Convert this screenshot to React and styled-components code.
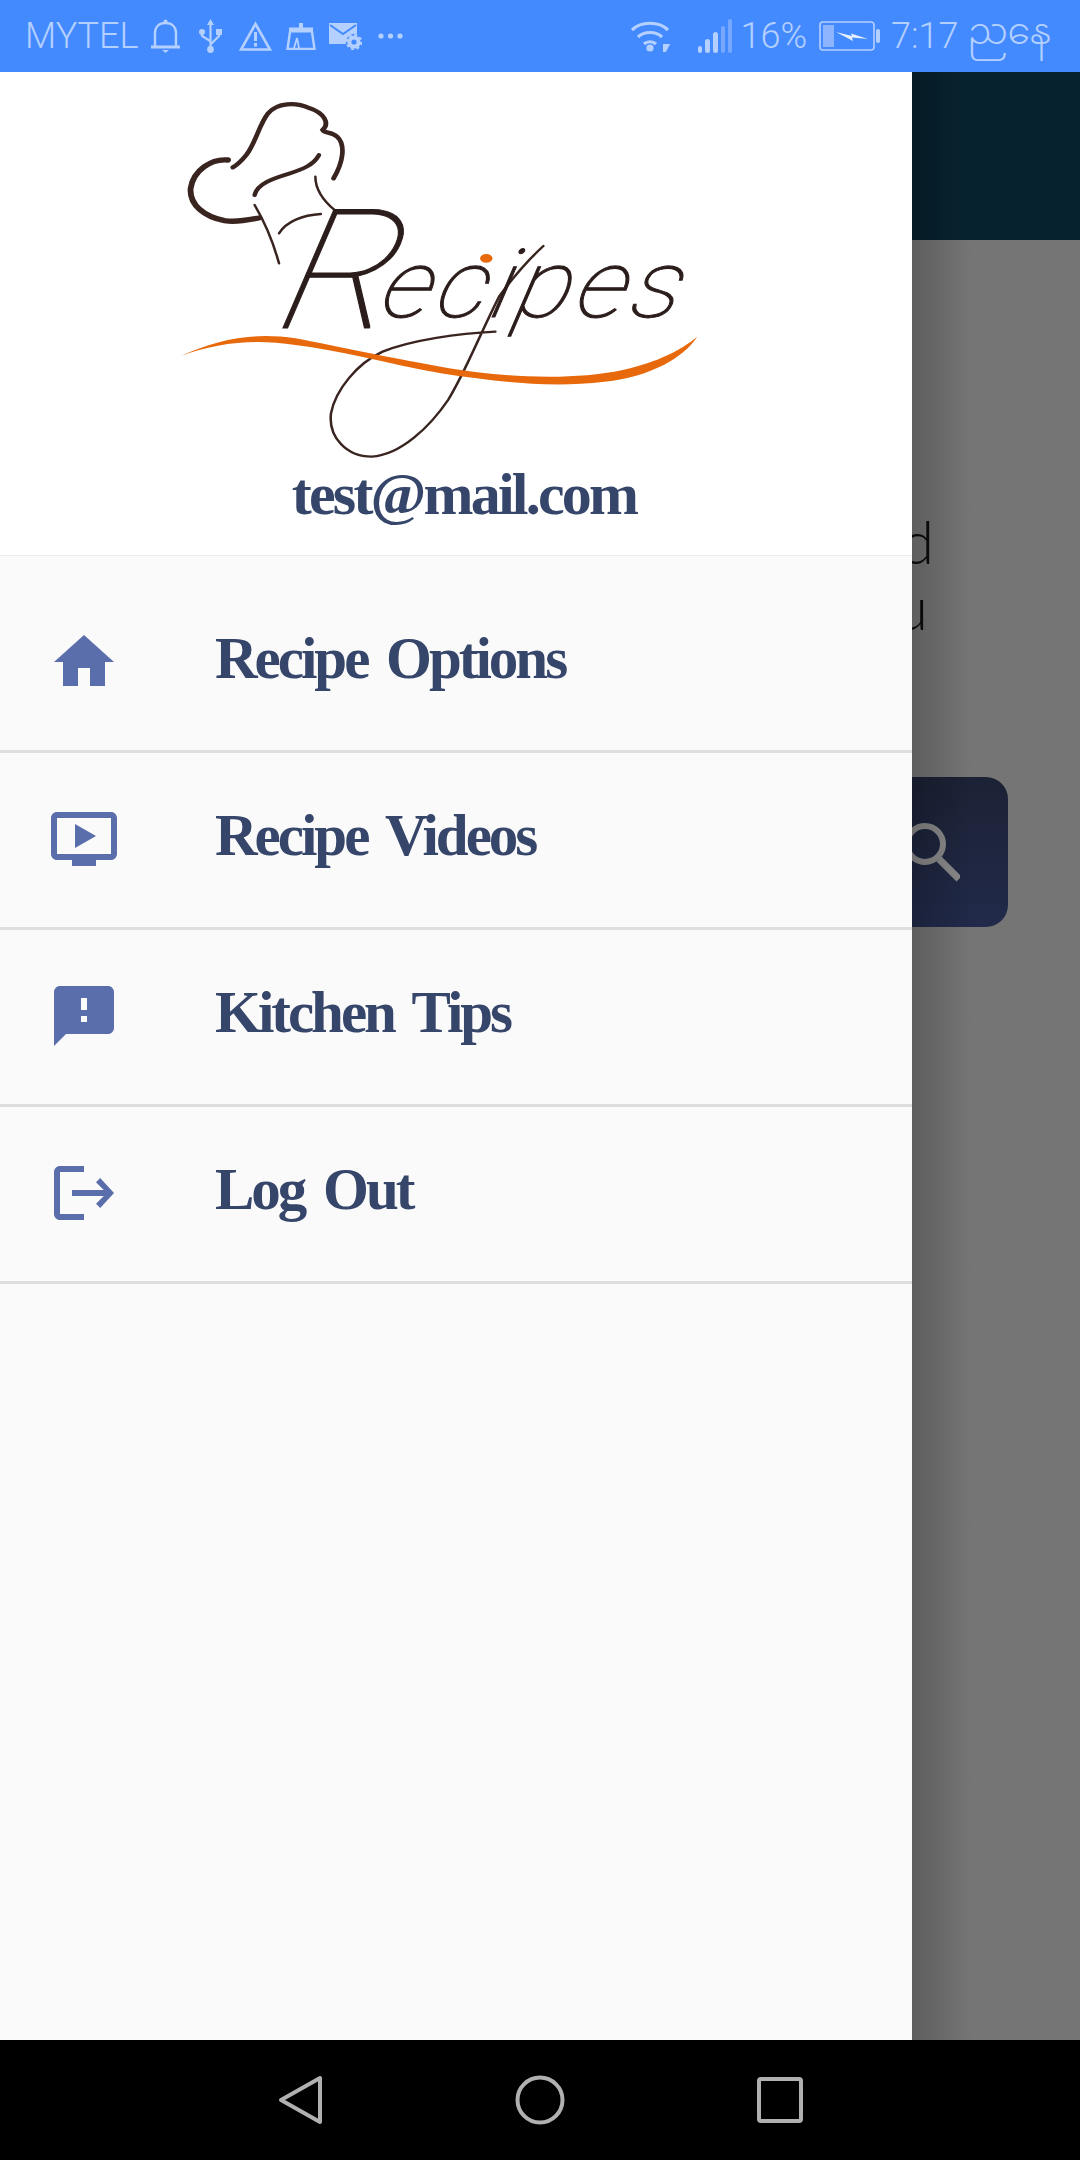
import React from "react";
import styled, { createGlobalStyle } from "styled-components";

const Global = createGlobalStyle`
  html, body {
    margin: 0;
    padding: 0;
    background: #757575;
  }
  * {
    box-sizing: border-box;
  }
`;

const Screen = styled.div`
  width: 1080px;
  height: 2160px;
  display: flex;
  flex-direction: column;
  overflow: hidden;
  font-family: "Liberation Serif", serif;
`;

const StatusBar = styled.div`
  height: 72px;
  flex: none;
  background: #448aff;
  color: #b4d0ff;
  display: flex;
  align-items: center;
  justify-content: space-between;
  padding: 0 29px 0 25px;
  font-family: Roboto, sans-serif;
  font-weight: 300;
  font-size: 36px;
`;

const StatusGroup = styled.div`
  display: flex;
  align-items: center;
`;

const StatusText = styled.span`
  margin-left: ${(p) => p.$ml || 0}px;
  line-height: 72px;
  white-space: nowrap;
`;

const StatusIcon = styled.svg`
  display: block;
  flex: none;
  margin-left: ${(p) => p.$ml || 0}px;
`;

const Burmese = styled(StatusText)`
  font-family: "Noto Sans Myanmar", "Padauk", "Noto Sans", sans-serif;
  font-size: 36px;
`;

const Main = styled.div`
  flex: 1;
  display: flex;
  min-height: 0;
`;

const Drawer = styled.aside`
  width: 912px;
  flex: none;
  background: #fafafa;
  display: flex;
  flex-direction: column;
`;

const DrawerHead = styled.div`
  height: 484px;
  flex: none;
  background: #fff;
  border-bottom: 1px solid #eeeeee;
  padding: 28px 0 0 179px;
`;

const Logo = styled.svg`
  display: block;
  filter: blur(0.6px);
`;

const Email = styled.div`
  width: 600px;
  margin: 2px 0 0 -15px;
  text-align: center;
  color: #36456a;
  font-size: 60px;
  line-height: 64px;
  font-weight: 700;
  letter-spacing: -2.8px;
`;

const Menu = styled.nav`
  padding-top: 20px;
`;

const Row = styled.div`
  height: 177px;
  border-bottom: 3px solid #dedede;
  display: flex;
  align-items: center;
  gap: 95px;
  padding: 0 0 3px 48px;
`;

const RowIcon = styled.svg`
  display: block;
  flex: none;
  width: 72px;
  height: 72px;
  fill: #5a6eac;
`;

const RowLabel = styled.span`
  margin-bottom: 7px;
  color: #36456a;
  font-size: 59px;
  line-height: 72px;
  font-weight: 700;
  letter-spacing: -3px;
  word-spacing: 7px;
`;

const Backdrop = styled.div`
  position: relative;
  flex: 1;
  overflow: hidden;
  background: #757575;

  &::after {
    content: "";
    position: absolute;
    left: 0;
    top: 0;
    bottom: 0;
    width: 60px;
    background: linear-gradient(to right, rgba(0, 0, 0, 0.2), rgba(0, 0, 0, 0));
  }
`;

const TopBar = styled.div`
  height: 168px;
  background: #07222f;
`;

const CutText = styled.div`
  width: 48px;
  margin: 268px 0 0 -30px;
  font-family: Lato, sans-serif;
  font-weight: 300;
  font-size: 60px;
  line-height: 66px;
  color: #0c0c0c;
  text-align: right;
`;

const CutLine = styled.div`
  margin-right: ${(p) => p.$mr || 0}px;
`;

const SearchButton = styled.div`
  width: 196px;
  height: 150px;
  margin: 137px 0 0 -100px;
  border-radius: 22px;
  background: linear-gradient(#1c2235, #212a4a);
  display: flex;
  align-items: center;
  justify-content: flex-end;
  padding: 0 48px 0 0;
`;

const NavBar = styled.div`
  height: 120px;
  flex: none;
  background: #000;
  display: flex;
  align-items: center;
  justify-content: center;
  gap: 190px;
`;

const NavIcon = styled.svg`
  display: block;
  width: 50px;
  height: 50px;
  fill: none;
  stroke: #b0b0b0;
  stroke-width: 4;
  stroke-linejoin: round;
`;

const Bell = () => (
  <StatusIcon $ml={12} width="31" height="34" viewBox="0 0 31 34" fill="none" stroke="#b4d0ff">
    <path d="M5 27V14C5 8 9 4 15.5 4S26 8 26 14V27" strokeWidth="2.4" />
    <path d="M1 28H30" strokeWidth="3" />
    <circle cx="15.5" cy="2.5" r="2" fill="#b4d0ff" stroke="none" />
    <path d="M12 31H19L15.5 34Z" fill="#b4d0ff" stroke="none" />
  </StatusIcon>
);

const Usb = () => (
  <StatusIcon $ml={18} width="23" height="34" viewBox="0 0 23 34" fill="none" stroke="#b4d0ff" strokeWidth="2.2">
    <path d="M11.5 4V29" />
    <path d="M11.5 0L15 6H8Z" fill="#b4d0ff" stroke="none" />
    <circle cx="11.5" cy="30.5" r="3.4" fill="#b4d0ff" stroke="none" />
    <circle cx="3" cy="13" r="3" fill="#b4d0ff" stroke="none" />
    <rect x="17" y="10" width="6" height="6" fill="#b4d0ff" stroke="none" />
    <path d="M3 14V17L11 22M20 15V17L12 25" />
  </StatusIcon>
);

const Warn = () => (
  <StatusIcon $ml={17} width="33" height="30" viewBox="0 0 33 30" fill="none" stroke="#b4d0ff">
    <path d="M16.5 3L31 28.5H2Z" strokeWidth="2.6" />
    <path d="M16.5 11V20M16.5 22V25.5" strokeWidth="3" />
  </StatusIcon>
);

const Tray = () => (
  <StatusIcon $ml={14} width="30" height="27" viewBox="0 0 30 27" fill="none" stroke="#b4d0ff" strokeWidth="2.4">
    <path d="M3 7H27" strokeWidth="5" />
    <path d="M13 0H17V5H13Z" fill="#b4d0ff" stroke="none" />
    <path d="M4 9L1.5 26H28.5L26 9" />
    <path d="M8 25L11 15L13 25" strokeWidth="1.8" />
  </StatusIcon>
);

const MailGear = () => (
  <StatusIcon $ml={13} width="33" height="27" viewBox="0 0 33 27">
    <path d="M0 0H28V11A9 9 0 0 0 17 21H0Z" fill="#b4d0ff" />
    <path d="M1 2L14 11L27 2" fill="none" stroke="#448aff" strokeWidth="2" />
    <circle cx="25" cy="19" r="4.6" fill="none" stroke="#b4d0ff" strokeWidth="4" />
    <circle cx="25" cy="19" r="7.2" fill="none" stroke="#b4d0ff" strokeWidth="2" strokeDasharray="3 2.65" />
  </StatusIcon>
);

const Dots = () => (
  <StatusIcon $ml={16} width="25" height="6" viewBox="0 0 25 6" fill="#b4d0ff">
    <circle cx="3" cy="3" r="2.6" />
    <circle cx="12.5" cy="3" r="2.6" />
    <circle cx="22" cy="3" r="2.6" />
  </StatusIcon>
);

const Wifi = () => (
  <StatusIcon width="40" height="34" viewBox="0 0 40 34" fill="none" stroke="#b4d0ff" strokeWidth="3.2">
    <path d="M2 11C11 2 29 2 38 11" />
    <path d="M8 18C14 12 26 12 32 18" />
    <circle cx="20" cy="29" r="3.6" fill="#b4d0ff" stroke="none" />
    <path d="M14 25C17 22 23 22 26 25" />
    <path d="M33 25H40L36 33H33Z" fill="#b4d0ff" stroke="none" />
  </StatusIcon>
);

const Signal = () => (
  <StatusIcon $ml={28} width="34" height="34" viewBox="0 0 34 34">
    <rect x="0" y="27" width="4" height="7" rx="2" fill="#b4d0ff" />
    <rect x="7" y="20" width="5" height="14" rx="2.5" fill="#b4d0ff" />
    <rect x="15" y="13" width="5" height="21" rx="2.5" fill="#b4d0ff" />
    <rect x="23" y="7" width="4" height="27" rx="2" fill="#76a8ff" />
    <rect x="30" y="0" width="4" height="34" rx="2" fill="#76a8ff" />
  </StatusIcon>
);

const Battery = () => (
  <StatusIcon $ml={12} width="61" height="30" viewBox="0 0 61 30" fill="none">
    <rect x="1" y="1" width="54" height="28" rx="3" stroke="#b4d0ff" strokeWidth="1.6" />
    <rect x="4" y="4" width="11" height="22" fill="#8db5ff" />
    <path d="M17 11L33 15L32 12.5L49 18L33 16.5L34 20Z" fill="#e4eeff" />
    <rect x="57" y="8" width="4" height="14" rx="2" fill="#b4d0ff" />
  </StatusIcon>
);

const menu = [
  {
    label: "Recipe Options",
    icon: "M10 20v-6h4v6h5v-8h3L12 3 2 12h3v8z",
  },
  {
    label: "Recipe Videos",
    icon: "M21 3H3c-1.11 0-2 .89-2 2v12c0 1.1.89 2 2 2h5v2h8v-2h5c1.1 0 1.99-.9 1.99-2L23 5c0-1.11-.9-2-2-2zm0 14H3V5h18v12zm-5-6l-7 4V7z",
  },
  {
    label: "Kitchen Tips",
    icon: "M20 2H4c-1.1 0-1.99.9-1.99 2L2 22l4-4h14c1.1 0 2-.9 2-2V4c0-1.1-.9-2-2-2zm-7 12h-2v-2h2v2zm0-4h-2V6h2v4z",
  },
  {
    label: "Log Out",
    icon: "M12 3H4c-1.1 0-2 .9-2 2v14c0 1.1.9 2 2 2h8v-2H4V5h8V3zM17.4 7 16 8.4 18.6 11H8v2h10.6L16 15.6 17.4 17 22 12z",
  },
];

const RecipesLogo = () => (
  <Logo width="520" height="360" viewBox="80 60 1430 1080" preserveAspectRatio="none" fill="none">
    <g stroke="#3a2420" strokeLinecap="round">
      <path d="M505 295C530 250 540 195 515 170C500 155 480 160 475 150C495 130 480 100 440 85C400 65 350 68 325 100C300 135 290 190 265 225C250 245 240 255 228 262" strokeWidth="13" />
      <path d="M215 240C170 235 120 270 112 325C108 375 150 410 205 422C240 428 270 420 300 414" strokeWidth="16" />
      <path d="M288 345C295 310 340 295 385 280C420 268 450 255 465 225" strokeWidth="12" />
      <path d="M455 290C455 330 480 365 510 392" strokeWidth="7" />
      <path d="M288 375C315 425 340 490 355 550" strokeWidth="7" />
      <path d="M355 460C375 425 420 405 470 402" strokeWidth="7" />
      <path d="M950 755C850 760 720 780 640 815C570 850 510 930 498 1000C490 1070 540 1130 610 1130C690 1125 770 1040 820 960C870 870 900 780 960 650C1000 590 1040 540 1082 498" strokeWidth="7" />
    </g>
    <path
      d="M85 828C180 780 280 755 400 775C520 800 640 830 800 860C950 890 1150 905 1300 870C1400 845 1460 810 1505 770C1470 830 1380 890 1250 905C1100 925 950 905 800 880C650 850 520 810 400 795C280 775 180 790 85 828Z"
      fill="#e8690b"
    />
    <ellipse cx="925" cy="535" rx="17" ry="13" fill="#e8690b" />
    <text
      x="345"
      y="745"
      transform="translate(165 0) skewX(-12.5)"
      fill="#2b1d1b"
      fontFamily="Roboto, sans-serif"
      fontStyle="italic"
      fontWeight="100"
      fontSize="285"
      letterSpacing="12"
      stroke="#2b1d1b"
      strokeWidth="3"
    >
      <tspan fontSize="500">R</tspan>
      <tspan dx="-55" dy="-35">ecipes</tspan>
    </text>
  </Logo>
);

export default function App() {
  return (
    <Screen>
      <Global />
      <StatusBar>
        <StatusGroup>
          <StatusText>MYTEL</StatusText>
          <Bell />
          <Usb />
          <Warn />
          <Tray />
          <MailGear />
          <Dots />
        </StatusGroup>
        <StatusGroup>
          <Wifi />
          <Signal />
          <StatusText $ml={8}>16%</StatusText>
          <Battery />
          <StatusText $ml={11}>7:17</StatusText>
          <Burmese $ml={9}>ညနေ</Burmese>
        </StatusGroup>
      </StatusBar>
      <Main>
        <Drawer>
          <DrawerHead>
            <RecipesLogo />
            <Email>test@mail.com</Email>
          </DrawerHead>
          <Menu>
            {menu.map((item) => (
              <Row key={item.label}>
                <RowIcon viewBox="0 0 24 24">
                  <path d={item.icon} />
                </RowIcon>
                <RowLabel>{item.label}</RowLabel>
              </Row>
            ))}
          </Menu>
        </Drawer>
        <Backdrop>
          <TopBar />
          <CutText>
            <CutLine $mr={-4}>d</CutLine>
            <CutLine $mr={2}>u</CutLine>
          </CutText>
          <SearchButton>
            <svg width="60" height="60" viewBox="0 0 60 60" fill="none" stroke="#8a8a8a">
              <circle cx="25" cy="22" r="18" strokeWidth="6" />
              <path d="M39 37L59 57" strokeWidth="7" />
            </svg>
          </SearchButton>
        </Backdrop>
      </Main>
      <NavBar>
        <NavIcon viewBox="0 0 50 50">
          <path d="M45 3V47L6 25Z" />
        </NavIcon>
        <NavIcon viewBox="0 0 50 50">
          <circle cx="25" cy="25" r="22.5" />
        </NavIcon>
        <NavIcon viewBox="0 0 50 50">
          <rect x="4" y="4" width="42" height="42" rx="2" />
        </NavIcon>
      </NavBar>
    </Screen>
  );
}
